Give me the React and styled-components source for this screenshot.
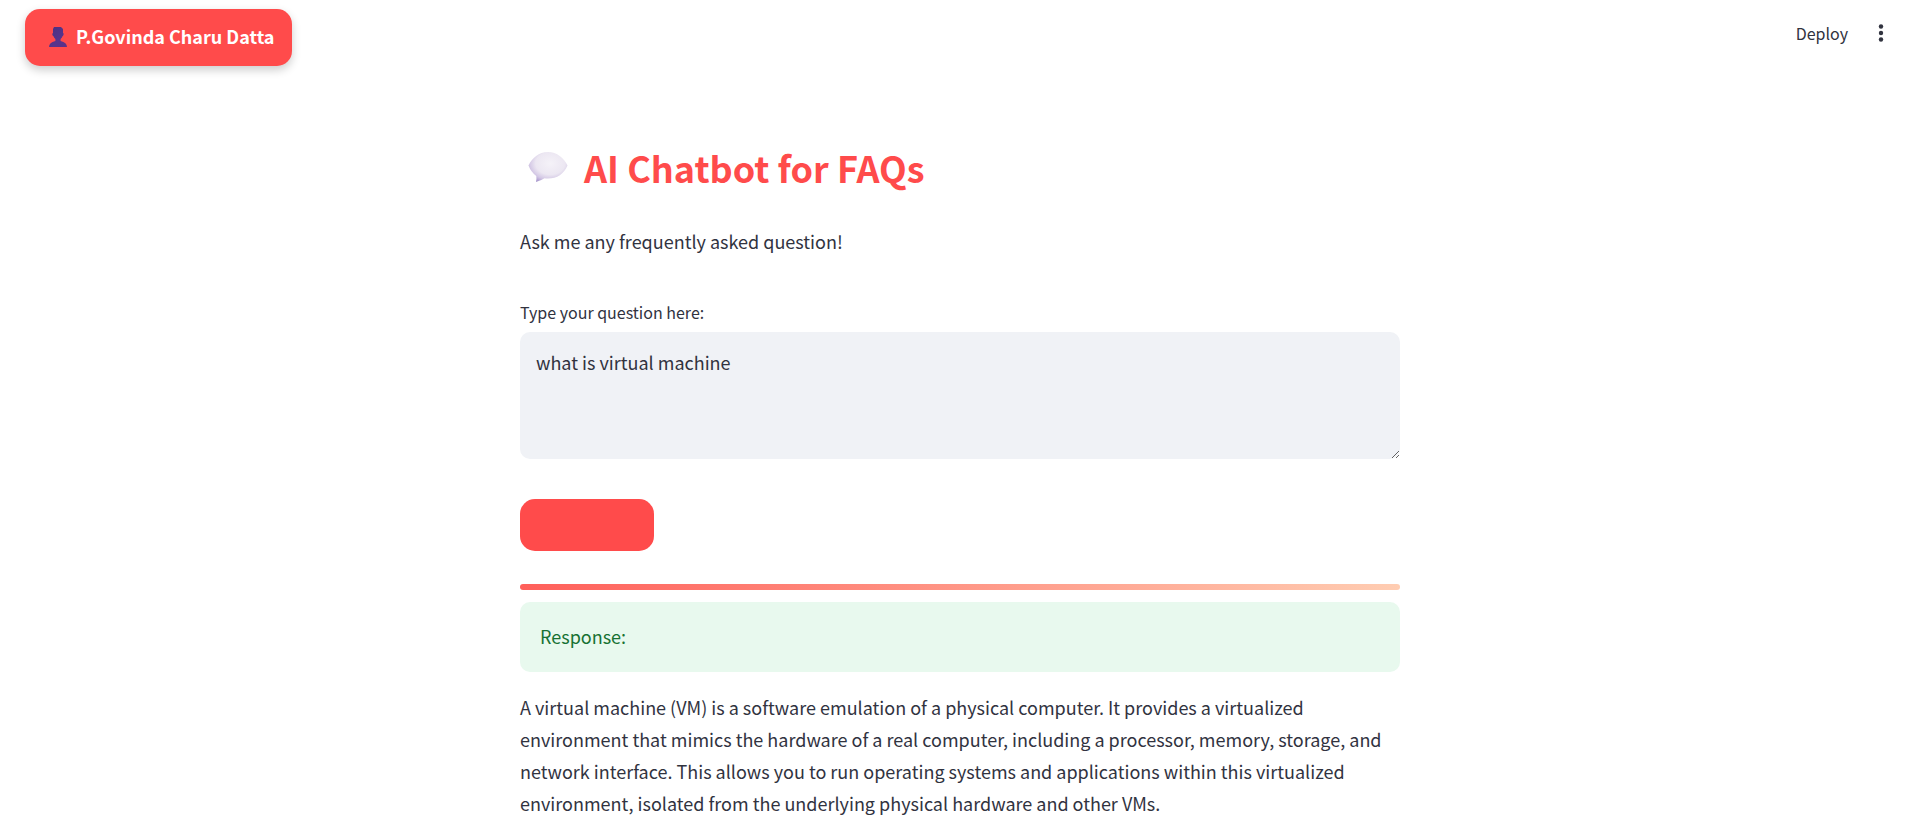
import React, { useState } from "react";
import styled, { createGlobalStyle } from "styled-components";

const GlobalStyle = createGlobalStyle`
  * { box-sizing: border-box; }
  body {
    margin: 0;
    background: #ffffff;
    color: #31333f;
    font-family: "Noto Sans CJK SC", "Source Sans Pro", sans-serif;
    font-size: 18px;
    line-height: 32px;
  }
`;

const Header = styled.header`
  display: flex;
  justify-content: space-between;
  align-items: flex-start;
  padding: 9px 19px 0 25px;
`;

const Badge = styled.div`
  display: flex;
  align-items: center;
  gap: 8px;
  padding: 11px 18px 14px 23px;
  border-radius: 15px;
  background: #ff4b4b;
  color: #ffffff;
  font-weight: 700;
  box-shadow: 0 4px 10px rgba(0, 0, 0, 0.2);
`;

const Actions = styled.div`
  display: flex;
  align-items: center;
  gap: 22px;
  padding-top: 8px;
`;

const PlainButton = styled.button`
  display: flex;
  align-items: center;
  padding: 0;
  border: 0;
  background: none;
  color: inherit;
  font: inherit;
  font-size: 16px;
  line-height: 32px;
  cursor: pointer;
`;

const Main = styled.main`
  width: 100%;
  max-width: 889px;
  margin: 0 auto;
  padding: 71px 0 16px 9px;
`;

const Title = styled.h1`
  display: flex;
  align-items: center;
  gap: 16px;
  margin: 0;
  padding-left: 8px;
  color: #ff4b4b;
  font-size: 36px;
  line-height: 60px;
  font-weight: 700;
`;

const Paragraph = styled.p`
  margin: 0;
`;

const Intro = styled(Paragraph)`
  margin: 28px 0 39px;
`;

const Form = styled.form`
  display: flex;
  flex-direction: column;
  align-items: flex-start;
`;

const Label = styled.label`
  font-size: 16px;
`;

const Question = styled.textarea`
  display: block;
  width: 100%;
  height: 127px;
  margin-top: 4px;
  padding: 14px 16px;
  border: 0;
  border-radius: 10px;
  outline: 0;
  background: #f0f2f6;
  color: #31333f;
  font: inherit;
  resize: vertical;
`;

const Submit = styled.button`
  width: 134px;
  height: 52px;
  margin-top: 40px;
  border: 0;
  border-radius: 15px;
  background: #ff4b4b;
  cursor: pointer;
`;

const Divider = styled.hr`
  height: 6px;
  margin: 33px 0 12px;
  border: 0;
  border-radius: 3px;
  background: linear-gradient(90deg, #ff5f5a, #ffcdb2);
`;

const Alert = styled.div`
  margin-bottom: 19px;
  padding: 18px 20px 20px;
  border-radius: 10px;
  background: #e8f9ee;
  color: #177233;
`;

function PersonIcon() {
  return (
    <svg width="20" height="22" viewBox="0 -2 20 22" aria-hidden="true">
      <defs>
        <linearGradient id="person" x1="0" y1="0" x2="1" y2="1">
          <stop offset="0" stopColor="#4a3080" />
          <stop offset=".6" stopColor="#56348c" />
          <stop offset="1" stopColor="#5f2f86" />
        </linearGradient>
      </defs>
      <path
        fill="url(#person)"
        d="M6 0h7l2 2v4q1 0 .6 1.6T14.500 9.200Q14 11 12.600 12v2q6.400 1.500 6.400 6H1q0-4.500 6.400-6v-2Q6 11 5.500 9.200 4.400 9 4.300 7.600T5 6V2z"
      />
    </svg>
  );
}

function BubbleIcon() {
  return (
    <svg width="40" height="32" viewBox="0 0 40 32" aria-hidden="true">
      <defs>
        <radialGradient id="bubble" cx=".56" cy=".38" r=".68">
          <stop offset="0" stopColor="#f5f2f8" />
          <stop offset=".55" stopColor="#ece7f2" />
          <stop offset=".8" stopColor="#d2c6e4" />
          <stop offset="1" stopColor="#a796cc" />
        </radialGradient>
      </defs>
      <path
        fill="url(#bubble)"
        d="M20 1C29 1 36 7 39.500 14.500 36 23 29 27.500 20 27.500q-2 0-3.500-.3Q13 29.500 8 31q.8-2.500.3-6Q3 21 .500 14.500C4 7 11 1 20 1z"
      />
    </svg>
  );
}

function MenuIcon() {
  return (
    <svg width="22" height="22" viewBox="0 0 22 22" fill="currentColor" aria-hidden="true">
      <circle cx="11" cy="4.500" r="2.200" />
      <circle cx="11" cy="11" r="2.200" />
      <circle cx="11" cy="17.500" r="2.200" />
    </svg>
  );
}

export default function App() {
  const [question, setQuestion] = useState("what is virtual machine");
  return (
    <>
      <GlobalStyle />
      <Header>
        <Badge>
          <PersonIcon />
          P.Govinda Charu Datta
        </Badge>
        <Actions>
          <PlainButton type="button">Deploy</PlainButton>
          <PlainButton type="button" aria-label="Main menu">
            <MenuIcon />
          </PlainButton>
        </Actions>
      </Header>
      <Main>
        <Title>
          <BubbleIcon />
          AI Chatbot for FAQs
        </Title>
        <Intro>Ask me any frequently asked question!</Intro>
        <Form onSubmit={(event) => event.preventDefault()}>
          <Label htmlFor="question">Type your question here:</Label>
          <Question
            id="question"
            spellCheck={false}
            value={question}
            onChange={(event) => setQuestion(event.target.value)}
          />
          <Submit type="submit" aria-label="Get answer" />
        </Form>
        <Divider />
        <Alert role="status">Response:</Alert>
        <Paragraph>
          A virtual machine (VM) is a software emulation of a physical computer. It provides a
          virtualized environment that mimics the hardware of a real computer, including a
          processor, memory, storage, and network interface. This allows you to run operating
          systems and applications within this virtualized environment, isolated from the
          underlying physical hardware and other VMs.
        </Paragraph>
      </Main>
    </>
  );
}
